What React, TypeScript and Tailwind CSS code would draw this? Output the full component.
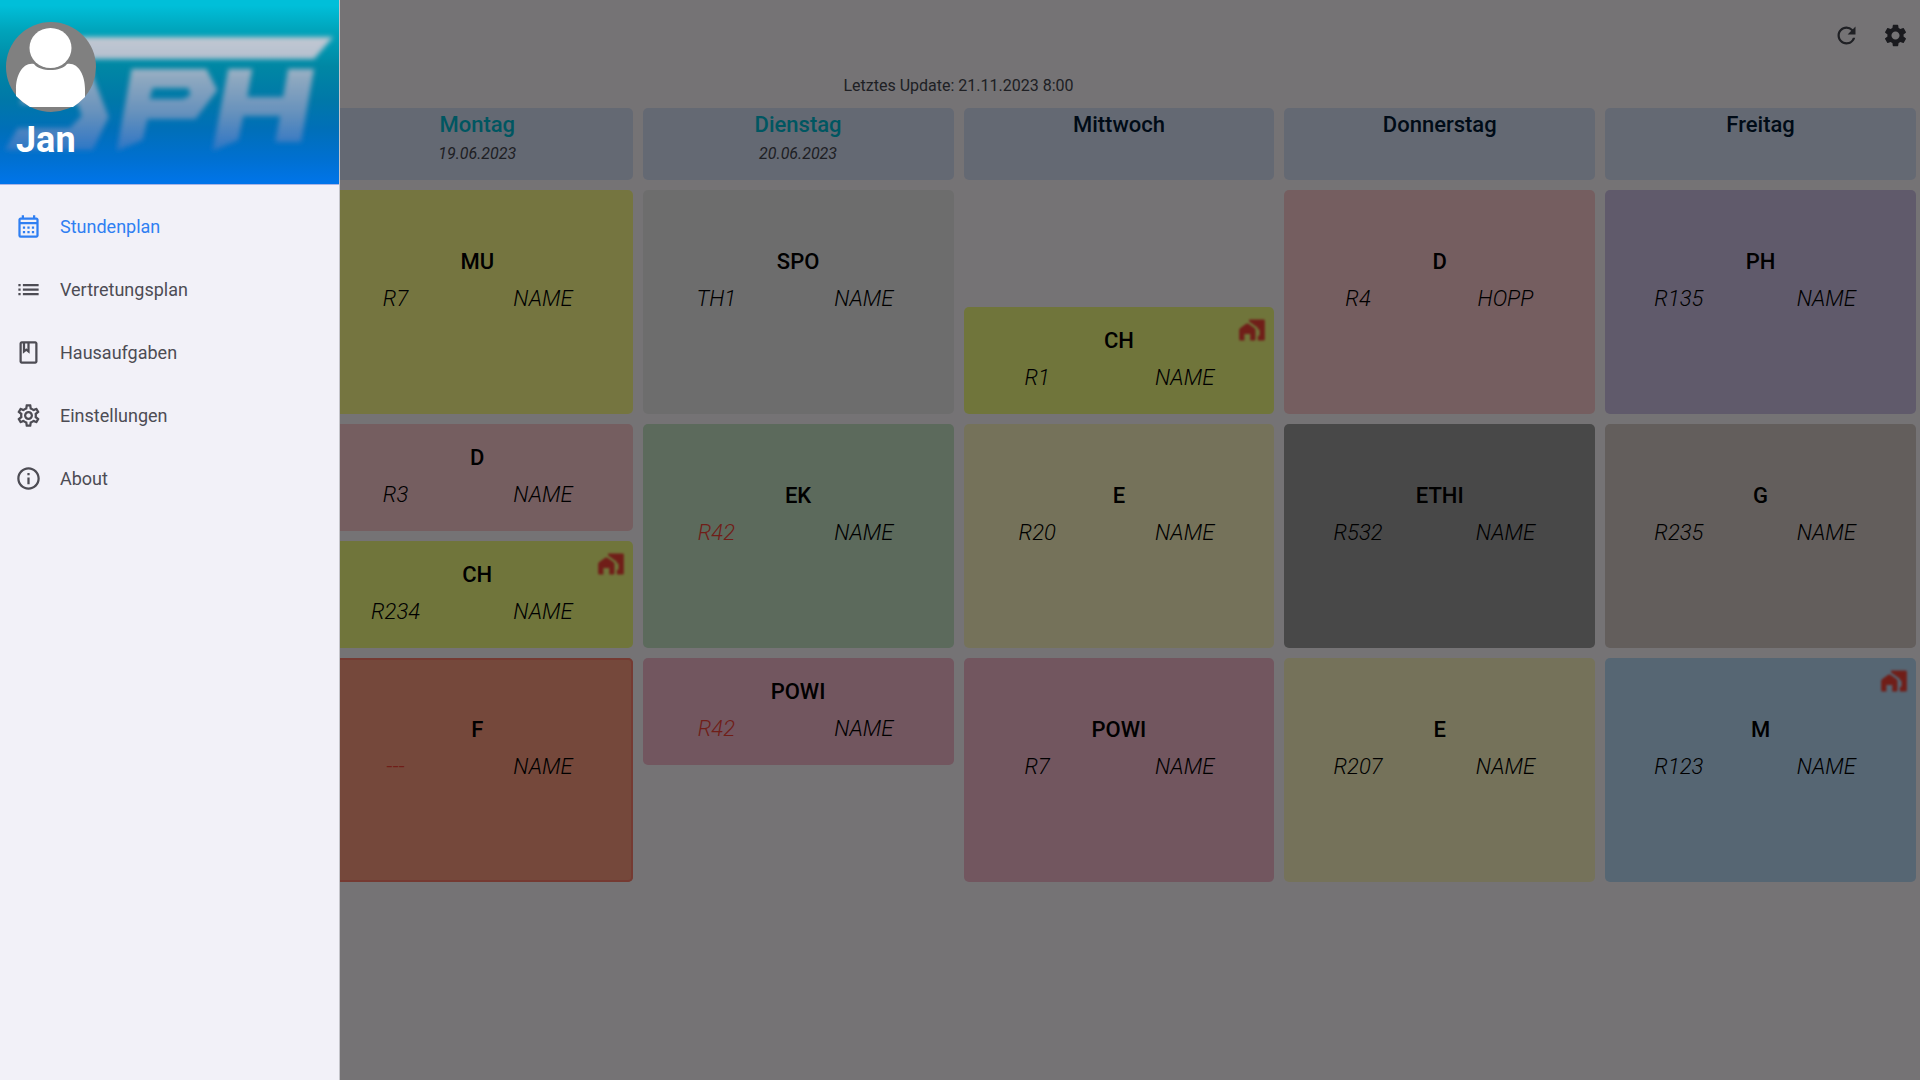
import type { ReactNode } from "react";
import {
  MdInfoOutline,
  MdList,
  MdOutlineCalendarMonth,
  MdOutlineClass,
  MdOutlineSettings,
  MdRefresh,
  MdSettings,
} from "react-icons/md";

type Lesson = {
  subject: string;
  room: string;
  teacher: string;
  color: string;
  // grid placement inside the six period rows of a day
  place: string;
  double?: boolean;
  changed?: boolean;
  homework?: boolean;
};

type Day = { name: string; date?: string; lessons: Lesson[] };

const days: Day[] = [
  {
    name: "Montag",
    date: "19.06.2023",
    lessons: [
      { subject: "MU", room: "R7", teacher: "NAME", color: "bg-[#ffff8d]", place: "row-start-1 row-span-2", double: true },
      { subject: "D", room: "R3", teacher: "NAME", color: "bg-[#ffcdd2]", place: "row-start-3" },
      { subject: "CH", room: "R234", teacher: "NAME", color: "bg-[#f4ff81]", place: "row-start-4", homework: true },
      { subject: "F", room: "---", teacher: "NAME", color: "bg-[#ff9e80] inset-ring-2 inset-ring-[#ff7f6e]", place: "row-start-5 row-span-2", double: true, changed: true },
    ],
  },
  {
    name: "Dienstag",
    date: "20.06.2023",
    lessons: [
      { subject: "SPO", room: "TH1", teacher: "NAME", color: "bg-[#eeeeee]", place: "row-start-1 row-span-2", double: true },
      { subject: "EK", room: "R42", teacher: "NAME", color: "bg-[#c8e6c9]", place: "row-start-3 row-span-2", double: true, changed: true },
      { subject: "POWI", room: "R42", teacher: "NAME", color: "bg-[#f8bbd0]", place: "row-start-5", changed: true },
    ],
  },
  {
    name: "Mittwoch",
    lessons: [
      { subject: "CH", room: "R1", teacher: "NAME", color: "bg-[#f4ff81]", place: "row-start-2", homework: true },
      { subject: "E", room: "R20", teacher: "NAME", color: "bg-[#fff9c4]", place: "row-start-3 row-span-2", double: true },
      { subject: "POWI", room: "R7", teacher: "NAME", color: "bg-[#f8bbd0]", place: "row-start-5 row-span-2", double: true },
    ],
  },
  {
    name: "Donnerstag",
    lessons: [
      { subject: "D", room: "R4", teacher: "HOPP", color: "bg-[#ffcdd2]", place: "row-start-1 row-span-2", double: true },
      { subject: "ETHI", room: "R532", teacher: "NAME", color: "bg-[#9e9e9e]", place: "row-start-3 row-span-2", double: true },
      { subject: "E", room: "R207", teacher: "NAME", color: "bg-[#fff9c4]", place: "row-start-5 row-span-2", double: true },
    ],
  },
  {
    name: "Freitag",
    lessons: [
      { subject: "PH", room: "R135", teacher: "NAME", color: "bg-[#d1c4e9]", place: "row-start-1 row-span-2", double: true },
      { subject: "G", room: "R235", teacher: "NAME", color: "bg-[#d7ccc8]", place: "row-start-3 row-span-2", double: true },
      { subject: "M", room: "R123", teacher: "NAME", color: "bg-[#bbdefb]", place: "row-start-5 row-span-2", double: true, homework: true },
    ],
  },
];

const menu: { label: string; icon: ReactNode; active?: boolean }[] = [
  { label: "Stundenplan", icon: <MdOutlineCalendarMonth size={27} />, active: true },
  { label: "Vertretungsplan", icon: <MdList size={27} /> },
  { label: "Hausaufgaben", icon: <MdOutlineClass size={27} /> },
  { label: "Einstellungen", icon: <MdOutlineSettings size={27} /> },
  { label: "About", icon: <MdInfoOutline size={27} /> },
];

function HomeworkIcon() {
  return (
    <svg
      viewBox="0 0 24 24"
      fill="currentColor"
      className="absolute top-[9px] right-2 h-7 w-7 text-[#f44336] blur-[1px]"
      role="img"
      aria-label="Hausaufgaben"
    >
      <path d="M1 12Q1 11 2 10.300L7 6.700Q8 6 9 6.700L14 10.300Q15 11 15 12V20Q15 21 14 21H10.500V15.500H5.500V21H2Q1 21 1 20Z" />
      <path d="M9.500 3H22Q23 3 23 4V20Q23 21 22 21H17V17H18.500V11.500H17V10L9.500 4.800Z" />
    </svg>
  );
}

function LessonCard({ lesson }: { lesson: Lesson }) {
  return (
    <article
      className={`relative rounded-[5px] text-[22px] leading-7 text-black ${lesson.color} ${lesson.place} ${lesson.double ? "pt-[58px]" : "pt-5"}`}
    >
      <h3 className="text-center font-medium">{lesson.subject}</h3>
      <div className="mt-[9px] grid grid-cols-2 pr-4 text-center font-light italic">
        <span className={lesson.changed ? "text-[#f44336]" : ""}>{lesson.room}</span>
        <span>{lesson.teacher}</span>
      </div>
      {lesson.homework && <HomeworkIcon />}
    </article>
  );
}

function DayColumn({ day }: { day: Day }) {
  return (
    <section className="flex flex-col gap-2.5">
      <header className="h-[72px] rounded-[5px] bg-[#dbe4fa] pt-[3px] text-center">
        <h2 className={`text-[22px] leading-7 font-medium ${day.date ? "text-[#00bcd4]" : "text-[#001a33]"}`}>{day.name}</h2>
        {day.date && <p className="text-base leading-[30px] text-[#44464f] italic">{day.date}</p>}
      </header>
      <div className="grid grid-rows-[repeat(6,107px)] gap-2.5">
        {day.lessons.map((l) => (
          <LessonCard key={l.place} lesson={l} />
        ))}
      </div>
    </section>
  );
}

function SchoolBanner() {
  return (
    <svg viewBox="0 0 340 184" preserveAspectRatio="none" className="absolute inset-0 h-full w-full" aria-hidden="true">
      <defs>
        <linearGradient id="letters" x1="0" y1="35" x2="0" y2="155" gradientUnits="userSpaceOnUse">
          <stop offset="0" stopColor="#c3c9d3" />
          <stop offset="0.2" stopColor="#b4bfce" />
          <stop offset="0.35" stopColor="#8fa9c0" />
          <stop offset="0.65" stopColor="#6691bc" />
          <stop offset="0.85" stopColor="#427fc2" />
          <stop offset="1" stopColor="#2474c8" />
        </linearGradient>
        <filter id="soft" x="-10%" y="-10%" width="120%" height="120%">
          <feGaussianBlur stdDeviation="2.6" />
        </filter>
      </defs>
      <g fill="url(#letters)" filter="url(#soft)">
        <path d="M60 37H334L315 59H50Z" />
        <path d="M30 68H90L109 117L93 150H5L18 128H70L82 116L78 104H20Z" />
        <path fillRule="evenodd" d="M132 69H207L218 90L196 119H148L143 140L117 151ZM153 88L150 99H184L191 95L189 88Z" />
        <path d="M229 69H253L248 97H284L289 69H315L302 142H276L281 116H244L239 140L213 151Z" />
      </g>
    </svg>
  );
}

function Avatar() {
  return (
    <svg viewBox="0 0 90 90" className="h-[90px] w-[90px]" role="img" aria-label="Profilbild">
      <circle cx="45" cy="45" r="45" fill="#808080" />
      <path
        d="M28 42C34 50 55 50 61 42C72 40 79 53 79 67V75Q73 81 67 85H24Q16 80 10 74V67C10 53 17 40 28 42Z"
        fill="#fff"
      />
      <ellipse cx="44.500" cy="26" rx="21" ry="20" fill="#fff" />
    </svg>
  );
}

function Drawer() {
  return (
    <aside className="fixed inset-y-0 left-0 w-[340px] border-r border-[#c4c4ca] bg-[#f2f1f8]">
      <div className="relative h-[185px] border-b border-[#a9b4e4] bg-[linear-gradient(#00bfd9_3%,#00a3ba_17%,#0087a4_36%,#0078a8_54%,#006fb8_70%,#0070d0_86%,#0075ea)]">
        <SchoolBanner />
        <div className="relative flex flex-col pt-[22px] pl-1.5">
          <Avatar />
          <p className="mt-2 pl-2.5 text-[36px] leading-10 font-bold text-white">Jan</p>
        </div>
      </div>
      <nav className="pt-2.5">
        {menu.map((m) => (
          <a
            key={m.label}
            href="#"
            className={`flex h-[63px] items-center gap-[18px] pl-[15px] text-lg ${m.active ? "text-[#2f7ff2]" : "text-[#4d4c54]"}`}
          >
            {m.icon}
            {m.label}
          </a>
        ))}
      </nav>
    </aside>
  );
}

export default function App() {
  return (
    <div className="min-h-screen bg-[#fffbff] font-[Roboto,sans-serif]">
      <header className="flex h-[71px] items-center justify-end gap-[22px] pr-[11px] text-[#44464f]">
        <button aria-label="Aktualisieren">
          <MdRefresh size={27} />
        </button>
        <button aria-label="Einstellungen" className="text-[#3a3a42]">
          <MdSettings size={27} />
        </button>
      </header>
      <main className="pr-1 pl-px">
        <p className="h-[37px] pt-[3px] text-center text-base leading-6 text-[#44464f]">Letztes Update: 21.11.2023 8:00</p>
        <div className="grid grid-cols-6 gap-2.5">
          <div />
          {days.map((d) => (
            <DayColumn key={d.name} day={d} />
          ))}
        </div>
      </main>
      <div className="fixed inset-0 bg-black/54" />
      <Drawer />
    </div>
  );
}
